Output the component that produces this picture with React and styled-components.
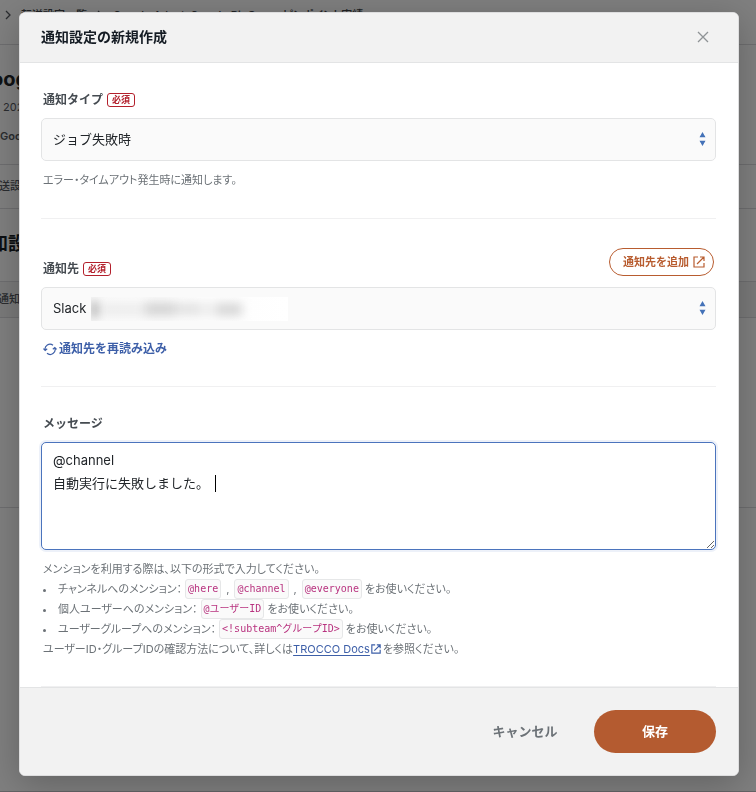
import React from "react";
import styled, { createGlobalStyle } from "styled-components";

const GlobalStyle = createGlobalStyle`
  *, *::before, *::after { box-sizing: border-box; }
  html { background: #fff; }
  body {
    margin: 0;
    overflow: hidden;
    color: #212529;
    font-family: Inter, "Noto Sans CJK JP", sans-serif;
    font-size: 13px;
    line-height: 20px;
  }
  button, select, textarea { font: inherit; color: inherit; margin: 0; }
`;

/* Page behind the dialog */
const Page = styled.div`
  min-height: 100vh;
  overflow: hidden;
  white-space: nowrap;
  border-bottom: 1px solid #c8c8cc;
`;
const Band = styled.div`
  display: flex;
  flex-direction: column;
  justify-content: center;
  height: ${(p) => p.$height}px;
  padding-bottom: 2px;
  border-bottom: 1px solid #dcdcdf;
  background: ${(p) => p.$bg || "transparent"};
`;
const Crumbs = styled.nav`
  display: flex;
  align-items: center;
  gap: 9px;
  height: 45px;
  padding: 0 0 14px 4px;
  border-bottom: 1px solid #dcdcdf;
  font-size: 11px;
  font-weight: 500;
  font-feature-settings: "palt";
  color: #41464b;
`;
const PageHead = styled.header`
  display: flex;
  flex-direction: column;
  height: 120px;
  padding-top: 22px;
  border-bottom: 1px solid #dcdcdf;
`;
const PageTitle = styled.h1`
  margin: 0 0 6px -24px;
  font-size: 20px;
  line-height: 24px;
  font-weight: 700;
`;
const PageMeta = styled.p`
  margin: 0 0 9px ${(p) => p.$shift || 0}px;
  font-size: 11px;
  font-weight: ${(p) => (p.$strong ? 600 : 400)};
  color: #55595f;
`;
const PageLabel = styled.span`
  margin-left: ${(p) => p.$shift}px;
  font-size: ${(p) => p.$size}px;
  font-weight: ${(p) => p.$weight || 500};
  color: ${(p) => p.$color || "#55595f"};
`;

/* Dialog shell */
const Overlay = styled.div`
  position: fixed;
  inset: 0;
  padding: 12px 17px 16px 19px;
  background: rgba(0, 0, 0, 0.5);
  overflow: hidden;
`;
const Dialog = styled.section`
  max-width: 720px;
  margin: 0 auto;
  border: 1px solid #dededf;
  border-radius: 6px;
  background: #fff;
  overflow: hidden;
  box-shadow: 0 8px 36px rgba(0, 0, 0, 0.24);
`;
const DialogHeader = styled.header`
  display: flex;
  align-items: center;
  justify-content: space-between;
  height: 50px;
  padding: 0 22px 2px 21px;
  border-bottom: 1px solid #e3e4e5;
  background: #f2f2f2;
`;
const DialogTitle = styled.h2`
  margin: 0;
  font-size: 14px;
  font-weight: 700;
  color: #151c24;
`;
const CloseButton = styled.button`
  display: grid;
  place-items: center;
  width: 26px;
  height: 26px;
  padding: 0;
  border: 0;
  background: none;
  color: #8f9396;
  cursor: pointer;
`;
const Form = styled.form`
  display: block;
`;
const DialogBody = styled.div`
  padding: 0 22px 0 21px;
`;
const Field = styled.div`
  padding: ${(p) => p.$top}px 0 ${(p) => p.$bottom}px;
  border-bottom: 1px solid #f0f0f1;
`;
const FieldHead = styled.div`
  display: flex;
  align-items: ${(p) => (p.$tall ? "flex-end" : "center")};
  justify-content: space-between;
  padding: 0 2px;
  margin-bottom: 8px;
`;
const LabelGroup = styled.div`
  display: flex;
  align-items: center;
  gap: 4px;
`;
const Label = styled.label`
  font-size: 12px;
  font-weight: 700;
  color: #454b51;
`;
const Required = styled.span`
  padding: 0 4px;
  border: 1px solid #b3202c;
  border-radius: 3px;
  font-size: 9px;
  line-height: 12px;
  font-weight: 700;
  color: #b3202c;
`;
const AddButton = styled.button`
  display: flex;
  align-items: center;
  gap: 4px;
  height: 28px;
  margin-bottom: 3px;
  padding: 0 8px 0 13px;
  border: 1px solid #b85c2f;
  border-radius: 14px;
  background: #fff;
  font-size: 11px;
  font-weight: 700;
  color: #b85c2f;
  cursor: pointer;
`;
const SelectBox = styled.div`
  position: relative;
`;
const Select = styled.select`
  display: block;
  width: 100%;
  height: 43px;
  padding: 0 32px 2px 11px;
  border: 1px solid #e3e4e5;
  border-radius: 5px;
  background: #fafafa;
  appearance: none;
`;
const Arrows = styled.svg`
  position: absolute;
  top: 14px;
  right: 10px;
  pointer-events: none;
`;
const Redacted = styled.div`
  position: absolute;
  top: 10px;
  left: 50px;
  width: 197px;
  height: 24px;
  background: linear-gradient(90deg, #fafafa, #fff);
  overflow: hidden;
  pointer-events: none;
`;
const Smudge = styled.svg`
  display: block;
  filter: blur(5px);
`;
const Hint = styled.div`
  padding: 0 2px;
  font-size: 11px;
  line-height: 20px;
  font-feature-settings: "palt";
  color: #6c7277;
`;
const ShortHint = styled(Hint)`
  padding-top: 9px;
`;
const ReloadButton = styled.button`
  display: flex;
  align-items: center;
  gap: 2px;
  margin: 9px 0 0 2px;
  padding: 0;
  border: 0;
  background: none;
  font-size: 12px;
  font-weight: 700;
  color: #3d5fa8;
  cursor: pointer;
`;
const MessageBox = styled.div`
  position: relative;
  margin-bottom: 9px;
`;
const Message = styled.textarea`
  display: block;
  width: 100%;
  height: 108px;
  padding: 6px 11px;
  border: 1px solid #4b74bd;
  border-radius: 5px;
  background: #fff;
  line-height: 23px;
  outline: none;
  resize: vertical;
  box-shadow: 0 0 0 2px #edf1f9;
`;
const Caret = styled.span`
  position: absolute;
  top: 33px;
  left: 174px;
  width: 1px;
  height: 17px;
  background: #000;
  pointer-events: none;
`;
const HintList = styled.ul`
  margin: 0;
  padding: 0 0 0 15px;
  list-style: none;
`;
const HintItem = styled.li`
  display: flex;
  align-items: center;
  gap: 3px;
  white-space: nowrap;
  &::before {
    content: "";
    width: 3px;
    height: 3px;
    margin: 2px 9px 0 -15px;
    border-radius: 50%;
    background: #6c7277;
  }
`;
const Comma = styled.span`
  padding: 0 2px;
`;
const Code = styled.code`
  padding: 0 2px;
  border: 1px solid #e6e7e8;
  border-radius: 3px;
  background: #fafafa;
  font-family: "DejaVu Sans Mono", "Noto Sans CJK JP", monospace;
  font-size: 10px;
  line-height: 18px;
  font-feature-settings: normal;
  color: #b8327f;
`;
const DocsLink = styled.a`
  color: #3d5fa8;
  text-decoration: underline;
  text-underline-offset: 2px;
`;
const LinkIcon = styled.svg`
  margin: 0 2px 0 1px;
  vertical-align: -1px;
`;
const DialogFooter = styled.footer`
  display: flex;
  align-items: center;
  justify-content: flex-end;
  gap: 20px;
  height: 88px;
  padding: 0 22px 0 21px;
  border-top: 1px solid #e3e4e5;
  background: #f2f2f2;
`;
const FooterButton = styled.button`
  height: 43px;
  min-width: ${(p) => (p.$primary ? 122 : 98)}px;
  padding: 0 16px 2px;
  border: 0;
  border-radius: 22px;
  background: ${(p) => (p.$primary ? "#b45b30" : "transparent")};
  color: ${(p) => (p.$primary ? "#fff" : "#6c7277")};
  font-weight: 700;
  cursor: pointer;
`;

const ExternalIcon = ({ size }) => (
  <svg width={size} height={size} viewBox="0 0 12 12" fill="none" stroke="currentColor" strokeWidth="1.2" aria-hidden="true">
    <path d="M5 1H1v10h10V7M7 1h4v4M11 1L4 8" />
  </svg>
);
const SortArrows = () => (
  <Arrows width="7" height="14" viewBox="0 0 7 14" fill="#4472b8" aria-hidden="true">
    <path d="M3.5 0L6.5 5.3H.5zM3.5 14L.5 8.7h6z" />
  </Arrows>
);

const Background = () => (
  <Page aria-hidden="true">
    <Crumbs>
      <svg width="8" height="10" viewBox="0 0 8 10" fill="none" stroke="#55595f" strokeWidth="1.3">
        <path d="M2 1l4 4-4 4" />
      </svg>
      <span>転送設定一覧</span>
      <svg width="8" height="10" viewBox="0 0 8 10" fill="none" stroke="#55595f" strokeWidth="1.3">
        <path d="M2 1l4 4-4 4" />
      </svg>
      <span>Google Ads -&gt; Google BigQuery ピンポイント実績</span>
    </Crumbs>
    <PageHead>
      <PageTitle>Google Ads</PageTitle>
      <PageMeta $shift={3}>2023/10/01</PageMeta>
      <PageMeta $strong>Google Ads</PageMeta>
    </PageHead>
    <Band $height={44}>
      <PageLabel $size={11} $shift={-12}>転送設定</PageLabel>
    </Band>
    <Band $height={73}>
      <PageLabel $size={18} $shift={-28} $weight={700} $color="#151c24">通知設定</PageLabel>
    </Band>
    <Band $height={36} $bg="#f4f4f4">
      <PageLabel $size={11} $shift={-2}>通知設定</PageLabel>
    </Band>
    <Band $height={190} />
  </Page>
);

export default function App() {
  return (
    <>
      <GlobalStyle />
      <Background />
      <Overlay>
        <Dialog role="dialog" aria-modal="true" aria-labelledby="dialog-title">
          <DialogHeader>
            <DialogTitle id="dialog-title">通知設定の新規作成</DialogTitle>
            <CloseButton type="button" aria-label="閉じる">
              <svg width="12" height="12" viewBox="0 0 12 12" fill="none" stroke="currentColor" strokeWidth="1.3">
                <path d="M1 1l10 10M11 1L1 11" />
              </svg>
            </CloseButton>
          </DialogHeader>
          <Form onSubmit={(e) => e.preventDefault()}>
            <DialogBody>
              <Field $top={27} $bottom={28}>
                <FieldHead>
                  <LabelGroup>
                    <Label htmlFor="notify-type">通知タイプ</Label>
                    <Required>必須</Required>
                  </LabelGroup>
                </FieldHead>
                <SelectBox>
                  <Select id="notify-type">
                    <option>ジョブ失敗時</option>
                  </Select>
                  <SortArrows />
                </SelectBox>
                <ShortHint>エラー・タイムアウト発生時に通知します。</ShortHint>
              </Field>

              <Field $top={29} $bottom={27}>
                <FieldHead $tall>
                  <LabelGroup>
                    <Label htmlFor="notify-target">通知先</Label>
                    <Required>必須</Required>
                  </LabelGroup>
                  <AddButton type="button">
                    通知先を追加
                    <ExternalIcon size={12} />
                  </AddButton>
                </FieldHead>
                <SelectBox>
                  <Select id="notify-target">
                    <option>Slack</option>
                  </Select>
                  <Redacted>
                    <Smudge width="197" height="24" viewBox="0 0 197 24">
                      <rect x="0" y="6" width="152" height="13" fill="#ededed" />
                      <rect x="-8" y="4" width="14" height="17" fill="#a8a8a8" />
                      <rect x="54" y="5" width="30" height="14" fill="#d6d6d6" />
                      <rect x="84" y="6" width="24" height="11" fill="#e2e2e2" />
                      <rect x="126" y="6" width="24" height="13" fill="#d8d8d8" />
                    </Smudge>
                  </Redacted>
                  <SortArrows />
                </SelectBox>
                <ReloadButton type="button">
                  <svg width="14" height="14" viewBox="0 0 14 14" fill="none" stroke="currentColor" strokeWidth="1.2" aria-hidden="true">
                    <path d="M2.2 8.2A4.9 4.9 0 0 1 10 3.2M.4 6.6l1.8 1.8 2-1.6M11.8 5.8A4.9 4.9 0 0 1 4 11.2M9.8 7.2l2-1.6 1.8 1.8" />
                  </svg>
                  通知先を再読み込み
                </ReloadButton>
              </Field>

              <Field $top={27} $bottom={27}>
                <FieldHead>
                  <Label htmlFor="notify-message">メッセージ</Label>
                </FieldHead>
                <MessageBox>
                  <Message id="notify-message" defaultValue={"@channel\n自動実行に失敗しました。"} />
                  <Caret />
                </MessageBox>
                <Hint>
                  メンションを利用する際は、以下の形式で入力してください。
                  <HintList>
                    <HintItem>
                      チャンネルへのメンション： <Code>@here</Code>
                      <Comma>,</Comma>
                      <Code>@channel</Code>
                      <Comma>,</Comma>
                      <Code>@everyone</Code>
                      をお使いください。
                    </HintItem>
                    <HintItem>
                      個人ユーザーへのメンション： <Code>@ユーザーID</Code>
                      をお使いください。
                    </HintItem>
                    <HintItem>
                      ユーザーグループへのメンション： <Code>&lt;!subteam^グループID&gt;</Code>
                      をお使いください。
                    </HintItem>
                  </HintList>
                  ユーザーID・グループIDの確認方法について、詳しくは
                  <DocsLink href="#docs">TROCCO Docs</DocsLink>
                  <LinkIcon width="10" height="10" viewBox="0 0 12 12" fill="none" stroke="#3d5fa8" strokeWidth="1.4" aria-hidden="true">
                    <path d="M5 1H1v10h10V7M7 1h4v4M11 1L4 8" />
                  </LinkIcon>
                  を参照ください。
                </Hint>
              </Field>
            </DialogBody>
            <DialogFooter>
              <FooterButton type="button">キャンセル</FooterButton>
              <FooterButton type="submit" $primary>保存</FooterButton>
            </DialogFooter>
          </Form>
        </Dialog>
      </Overlay>
    </>
  );
}
